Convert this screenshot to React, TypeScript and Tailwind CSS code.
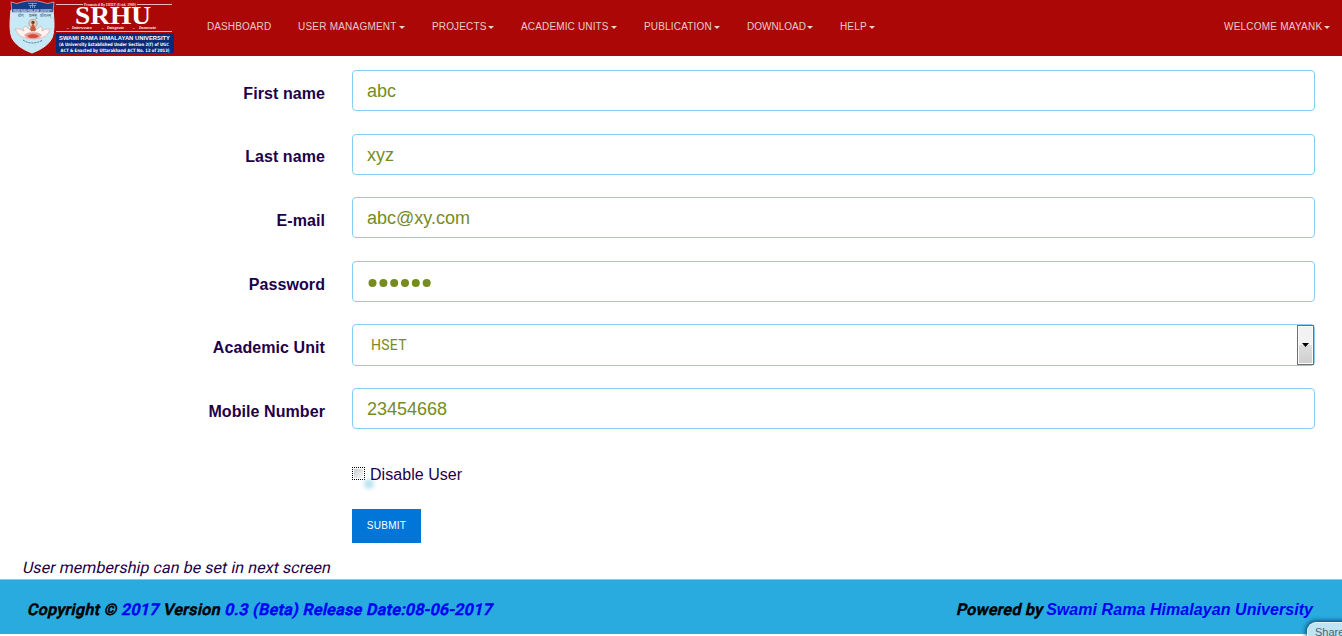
import React from 'react';

const sans = "font-['Liberation_Sans',Arial,sans-serif]";
const roboto = 'font-[Roboto,sans-serif]';
const slanted = 'inline-block -skew-x-12 not-italic font-medium [-webkit-text-stroke:0.6px_currentColor]';

function Logo() {
  return (
    <svg width="166" height="55" viewBox="8 0 166 55" className="shrink-0" fontFamily="Liberation Sans, Arial, sans-serif">
      <path d="M11 10C10 20 9 30 12 38Q16 47 32 53Q48 47 52 38C55 30 54 20 53 10Z" fill="#c5e9f6" stroke="#e9e9ef" strokeWidth="1" />
      <path d="M11 2Q17 5 22 2Q27 .5 32 1Q38 .5 42 2Q47 5 54 2L53 12.5H12Z" fill="#173b87" stroke="#dce5f2" strokeWidth=".6" />
      <path d="M28 3.5H37M29 5.5H36M32.5 3V8M30.5 5.5V8M34.5 5.5V8" stroke="#9fb6df" strokeWidth=".7" />
      <text x="13" y="11.5" fontSize="2.6" fontWeight="700" fill="#e4edfb" textLength="39" lengthAdjust="spacingAndGlyphs">SWAMI RAMA HIMALAYAN UNIVERSITY</text>
      <g fontSize="4" fill="#454d6e" fontFamily="Noto Sans, sans-serif">
        <text x="18" y="17.3" textLength="6" lengthAdjust="spacingAndGlyphs">योगः</text>
        <text x="29" y="17.3" textLength="8" lengthAdjust="spacingAndGlyphs">कर्मसु</text>
        <text x="40" y="17.3" textLength="11" lengthAdjust="spacingAndGlyphs">कौशलम्</text>
      </g>
      <circle cx="33" cy="23.5" r="4.2" fill="#e8cdbb" stroke="#b98f85" strokeWidth=".7" />
      <circle cx="33" cy="22.5" r="1.7" fill="#68443b" />
      <path d="M33 23L36 29L38 31H28L30 29Z" fill="#c85b3b" />
      <path d="M15 29Q20 28 24 31Q22 28 25 26Q29 28 33 33Q37 28 41 26Q43 28 42 31Q46 28 50 29Q49 34 44 37Q34 41 22 37Q17 34 15 29Z" fill="#fff2ef" stroke="#d99e9a" strokeWidth=".6" />
      <path d="M24 35Q29 31 33 33Q37 31 42 35L39 38Q33 40 27 38Z" fill="#e4a29a" />
      <path d="M27 36Q33 32 39 36L36 38H30Z" fill="#d94c39" />
      <path d="M23 40Q32 46 43 40" fill="none" stroke="#536b87" strokeWidth="1" strokeDasharray="2 1" />
      <path d="M56 4.5H83M137 4.5H172M56 31.5H172" stroke="#f4caca" strokeWidth=".9" />
      <text x="84" y="5.6" fontSize="4" fontWeight="700" fill="#f8dcdc" textLength="52" lengthAdjust="spacingAndGlyphs" fontFamily="Liberation Serif, serif">Promoted By HIHT (Estd. 1989)</text>
      <text x="75" y="24.3" fontSize="26" fontWeight="700" fill="#fff" textLength="76" lengthAdjust="spacingAndGlyphs" fontFamily="Liberation Serif, serif">SRHU</text>
      <g fill="#fff0f0" fontSize="4.6" fontWeight="700" fontStyle="italic" fontFamily="Liberation Serif, serif">
        <text x="67" y="29.3">-</text><text x="72" y="29.3" textLength="20" lengthAdjust="spacingAndGlyphs">Interweave</text>
        <text x="102" y="29.3">-</text><text x="107" y="29.3" textLength="17" lengthAdjust="spacingAndGlyphs">Integrate</text>
        <text x="133" y="29.3">-</text><text x="139" y="29.3" textLength="17" lengthAdjust="spacingAndGlyphs">Innovate</text>
      </g>
      <rect x="56" y="33.5" width="118" height="19.5" fill="#082a78" />
      <g fill="#fff" fontWeight="700">
        <text x="59" y="39.6" fontSize="6" textLength="111" lengthAdjust="spacingAndGlyphs">SWAMI RAMA HIMALAYAN UNIVERSITY</text>
        <text x="59" y="46.1" fontSize="4.5" textLength="110" lengthAdjust="spacingAndGlyphs" fontFamily="DejaVu Sans, sans-serif">(A University Established Under Section 2(f) of UGC</text>
        <text x="60.5" y="52" fontSize="4.5" textLength="109" lengthAdjust="spacingAndGlyphs" fontFamily="DejaVu Sans, sans-serif">ACT &amp; Enacted by Uttarakhand ACT No. 12 of 2013)</text>
      </g>
    </svg>
  );
}

function Caret() {
  return (
    <svg width="6" height="3" viewBox="0 0 6 3" className="mt-px shrink-0">
      <path d="M0 0H6L3 3Z" fill="#ead0d0" />
    </svg>
  );
}

const menu = [
  { label: 'USER MANAGMENT', width: 'w-[107px] tracking-[0.22px]' },
  { label: 'PROJECTS', width: 'w-[62px] tracking-[0.15px]' },
  { label: 'ACADEMIC UNITS', width: 'w-[96px] tracking-[0.15px]' },
  { label: 'PUBLICATION', width: 'w-[76px] tracking-[0.18px]' },
  { label: 'DOWNLOAD', width: 'w-[66px]' },
  { label: 'HELP', width: 'w-[35px] tracking-[0.15px]' },
];

function Header() {
  return (
    <header className="flex h-14 border-b border-[#5a2928] bg-[#ab0707] pl-2">
      <Logo />
      <nav className="ml-[33px] flex h-[53px] flex-1 items-center gap-[27px] whitespace-nowrap pr-3 text-[10px] text-[#e6cccc]">
        <a className="w-16 tracking-[0.1px]">DASHBOARD</a>
        {menu.map(({ label, width }) => (
          <a key={label} className={`flex items-center justify-between ${width}`}>{label}<Caret /></a>
        ))}
        <a className="ml-auto flex w-[106px] items-center justify-between tracking-[0.22px]">WELCOME MAYANK<Caret /></a>
      </nav>
    </header>
  );
}

const inputBox = 'h-[41px] w-[963px] rounded-[4px] border border-[#87cff0] bg-white px-[14px] pt-[2px] text-[18px] text-[#758c22] outline-none';

function Row({ label, height, labelTop = 'pt-3', children }: { label: string; height: string; labelTop?: string; children: React.ReactNode }) {
  return (
    <div className={`flex items-start ${height}`}>
      <label className={`mr-[27px] w-[325px] text-right text-base font-bold leading-6 tracking-[0.08px] text-[#1d0148] ${labelTop}`}>{label}</label>
      {children}
    </div>
  );
}

export default function App() {
  return (
    <div className={`h-[636px] w-[1342px] overflow-hidden bg-white ${sans}`}>
      <Header />
      <main className="h-[523px] pt-[14px] text-[#1d0148]">
        <Row label="First name" height="h-16"><input className={inputBox} defaultValue="abc" /></Row>
        <Row label="Last name" height="h-[63px]" labelTop="pt-[11px]"><input className={inputBox} defaultValue="xyz" /></Row>
        <Row label="E-mail" height="h-16"><input className={inputBox} defaultValue="abc@xy.com" /></Row>
        <Row label="Password" height="h-[63px]">
          <div className={`${inputBox} flex items-center`} role="textbox" aria-label="Password">
            <svg width="66" height="8" viewBox="0 0 66 8" fill="#758c22">
              {[5.5, 16.4, 27.2, 38, 48.8, 59.7].map((x) => <circle key={x} cx={x} cy="4" r="4" />)}
            </svg>
          </div>
        </Row>
        <Row label="Academic Unit" height="h-16">
          <div className="flex h-[42px] w-[963px] items-center justify-between rounded-[4px] border border-[#87cff0] pl-[18px] text-[14px] text-[#758c22]">
            <span className={`tracking-[0.25px] ${roboto}`}>HSET</span>
            <span className="flex h-10 w-[17px] items-center justify-center border border-[#707070] bg-linear-to-b from-[#f2f2f2] from-50% via-[#dedede] via-50% to-[#cecece] shadow-[inset_0_0_0_1px_#fafafa]">
              <svg width="7" height="4" viewBox="0 0 7 4"><path d="M0 0H7L3.5 4Z" fill="#000" /></svg>
            </span>
          </div>
        </Row>
        <Row label="Mobile Number" height="h-[79px]"><input className={inputBox} defaultValue="23454668" /></Row>
        <div className="ml-[352px] flex h-[42px] items-start">
          <span className="relative flex size-[13px] items-center justify-center border border-dotted border-black bg-white">
            <span className="size-[9px] bg-linear-to-br from-[#c9ced2] to-[#f7f7f7]" />
            <span className="absolute left-[11px] top-[11px] size-[10px] rounded-full bg-[#b8e2f0] blur-[2px]" />
          </span>
          <span className="relative ml-[5px] -mt-[4px] text-base leading-6 tracking-[0.05px]">Disable User</span>
        </div>
        <button className="ml-[352px] block h-[34px] w-[69px] bg-[#0275d8] pb-[2px] text-[10px] tracking-[0.3px] text-white">SUBMIT</button>
        <p className={`ml-[23px] mt-[13px] w-fit -skew-x-12 whitespace-nowrap text-base leading-6 tracking-[0.05px] ${roboto}`}>User membership can be set in next screen</p>
      </main>
      <footer className={`relative flex h-[55px] items-center justify-between border-t border-[#88cce9] bg-[#29abe0] pl-[28px] pr-[29px] pt-[6px] text-base font-bold italic text-black ${roboto}`}>
        <span className={`tracking-[0.35px] ${slanted}`}>Copyright © <span className="text-[#0000f5]">2017</span> Version <span className="text-[#0000f5]">0.3 (Beta) Release Date:08-06-2017</span></span>
        <span className="flex gap-[3px]"><span className={`tracking-[0.3px] ${slanted}`}>Powered by</span><span className={`tracking-[0.06px] text-[#0000f5] ${sans}`}>Swami Rama Himalayan University</span></span>
        <span className={`absolute left-[1307px] top-[42px] h-[16px] w-[60px] rounded-tl-[9px] border-l border-t border-[#e1f3fb] bg-[#bfe4f4] pl-[7px] pt-[2px] text-[11px] font-normal not-italic leading-[14px] text-[#50626b] shadow-[-1px_-1px_5px_#073f5b] ${sans}`}>Share</span>
      </footer>
    </div>
  );
}
